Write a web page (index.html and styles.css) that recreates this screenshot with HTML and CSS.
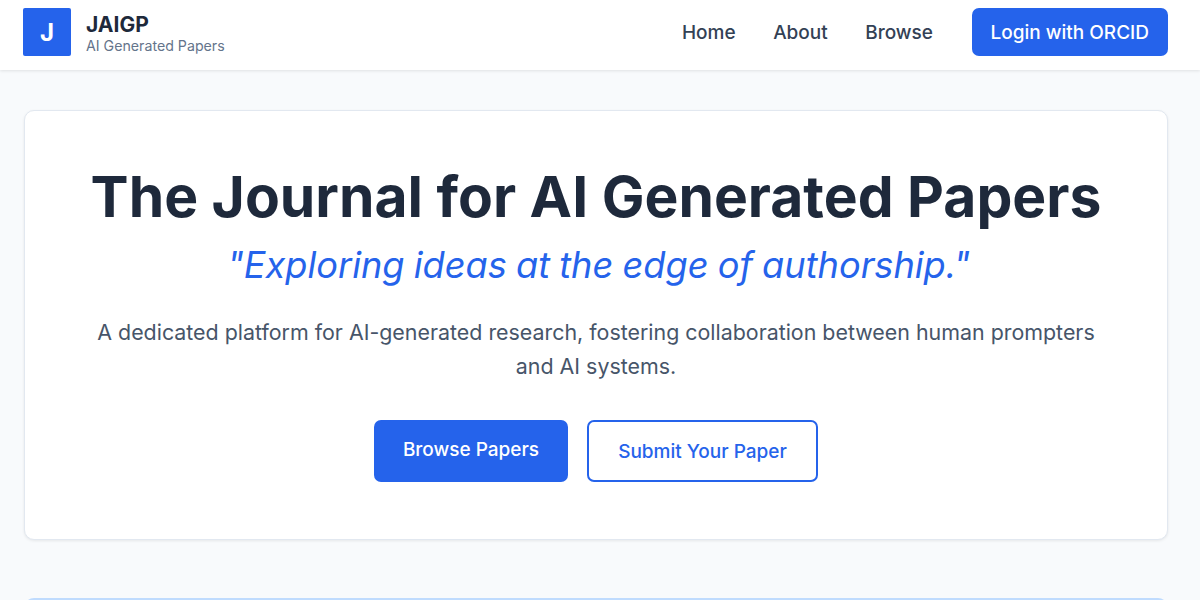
FILE: index.html
```html
<!DOCTYPE html>
<html lang="en">
<head>
<meta charset="utf-8">
<title>JAIGP</title>
<link rel="stylesheet" href="styles.css">
</head>
<body>
<header class="site-header">
  <a class="brand" href="#">
    <span class="logo">J</span>
    <span class="brand-text">
      <span class="brand-name">JAIGP</span>
      <span class="brand-sub">AI Generated Papers</span>
    </span>
  </a>
  <nav class="nav">
    <a href="#">Home</a>
    <a href="#">About</a>
    <a href="#">Browse</a>
    <a class="login" href="#">Login with ORCID</a>
  </nav>
</header>
<main class="main">
  <section class="hero">
    <h1>The Journal for AI Generated Papers</h1>
    <p class="tagline">"Exploring ideas at the edge of authorship."</p>
    <p class="lead">A dedicated platform for AI-generated research, fostering collaboration between human prompters and AI systems.</p>
    <div class="actions">
      <a class="btn btn-primary" href="#">Browse Papers</a>
      <a class="btn btn-outline" href="#">Submit Your Paper</a>
    </div>
  </section>
  <section class="next-card"></section>
</main>
</body>
</html>
```
FILE: styles.css
```css
* { box-sizing: border-box; }
html, body { margin: 0; height: 600px; overflow: hidden; }
body {
  background: #f8fafc;
  font-family: Inter, "Liberation Sans", sans-serif;
  color: #1e293b;
}
a { text-decoration: none; color: inherit; }
.site-header {
  height: 70px;
  background: #fff;
  box-shadow: 0 1px 3px rgba(0, 0, 0, 0.1);
  padding: 8px 32px 0 23px;
  display: flex;
  justify-content: space-between;
  align-items: flex-start;
  position: relative;
}
.brand { display: flex; align-items: center; gap: 15px; }
.logo {
  width: 48px;
  height: 48px;
  background: #2563eb;
  border-radius: 2px;
  color: #fff;
  font-size: 24px;
  font-weight: 700;
  display: flex;
  align-items: center;
  justify-content: center;
}
.brand-text { display: flex; flex-direction: column; padding-bottom: 1px; }
.brand-name { font-size: 21px; font-weight: 700; line-height: 25px; margin-top: 4px; color: #1e293b; }
.brand-sub { font-size: 14.2px; line-height: 18px; color: #64748b; }
.nav { display: flex; align-items: center; gap: 37.5px; font-size: 19px; color: #334155; height: 48px; font-weight: 450; }
.login {
  background: #2563eb;
  color: #fff;
  border-radius: 7px;
  height: 48px;
  margin-left: 1px;
  padding: 0 19px;
  display: flex;
  align-items: center;
  font-weight: 500;
}
.main { padding: 40px 32px 0 24px; }
.hero {
  height: 430px;
  background: #fff;
  border: 1px solid #e2e8f0;
  border-radius: 10px;
  box-shadow: 0 1px 3px rgba(0, 0, 0, 0.08);
  padding: 50px 64px 0;
  text-align: center;
}
h1 { margin: 0; font-size: 57px; line-height: 72px; font-weight: 700; color: #1e293b; }
.tagline { margin: 5px 0 0; padding-left: 5px; font-size: 36.2px; font-weight: 450; word-spacing: -1px; line-height: 54px; font-style: italic; color: #2563eb; }
.lead { margin: 23px 0 0; font-size: 21.4px; line-height: 34px; color: #475569; }
.actions { margin-top: 37px; display: flex; justify-content: center; align-items: flex-start; gap: 19px; }
.btn { font-size: 19px; font-weight: 500; border-radius: 7px; display: flex; align-items: center; justify-content: center; }
.btn-primary { background: #2563eb; color: #fff; width: 194px; height: 62px; padding-bottom: 4px; }
.btn-outline { background: #fff; color: #2563eb; border: 2px solid #2563eb; width: 231px; height: 62px; }
.next-card {
  margin-top: 58px;
  height: 60px;
  background: #eff6ff;
  border: 2px solid #bfdbfe;
  border-radius: 10px;
}
```
